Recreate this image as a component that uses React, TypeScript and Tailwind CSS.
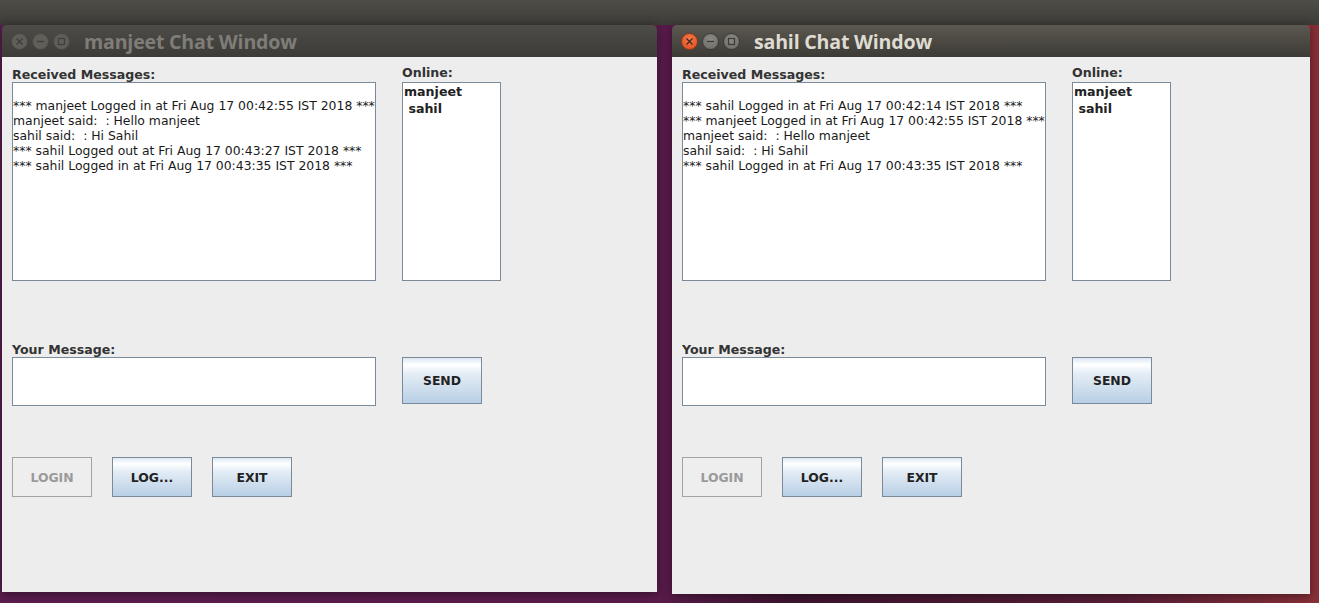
import React from "react";

type WinProps = {
  title: string;
  active: boolean;
  lines: string[];
  wide: boolean;
};

const LEFT_LINES = [
  "",
  "*** manjeet Logged in at Fri Aug 17 00:42:55 IST 2018 ***",
  "manjeet said:  : Hello manjeet",
  "sahil said:  : Hi Sahil",
  "*** sahil Logged out at Fri Aug 17 00:43:27 IST 2018 ***",
  "*** sahil Logged in at Fri Aug 17 00:43:35 IST 2018 ***",
];

const RIGHT_LINES = [
  "",
  "*** sahil Logged in at Fri Aug 17 00:42:14 IST 2018 ***",
  "*** manjeet Logged in at Fri Aug 17 00:42:55 IST 2018 ***",
  "manjeet said:  : Hello manjeet",
  "sahil said:  : Hi Sahil",
  "*** sahil Logged in at Fri Aug 17 00:43:35 IST 2018 ***",
];

export default function App() {
  return (
    <div className="w-[1319px] h-[603px] overflow-hidden flex flex-col bg-[linear-gradient(to_right,#5b1d4f_0%,#5a1c4c_50%,#3f1530_60%,#5a1f38_85%,#8a3038_100%)] font-['DejaVu_Sans',sans-serif]">
      {/* top panel */}
      <div className="h-[25px] shrink-0 bg-gradient-to-b from-[#4f4d47] to-[#3d3c38]" />
      <div className="flex items-start pl-[2px] gap-[15px]">
        <ChatWindow title="manjeet Chat Window" active={false} lines={LEFT_LINES} wide={true} />
        <ChatWindow title="sahil Chat Window" active={true} lines={RIGHT_LINES} wide={false} />
      </div>
    </div>
  );
}

function ChatWindow({ title, active, lines, wide }: WinProps) {
  return (
    <div
      className={`flex flex-col shadow-[0_2px_10px_rgba(0,0,0,0.45)] ${
        wide ? "w-[655px] h-[567px]" : "w-[638px] h-[569px]"
      }`}
    >
      <TitleBar title={title} active={active} />
      <div className="flex-1 bg-[#ededed] pl-[10px] pt-[7px] text-[#333333]">
        {/* received + online */}
        <div className="flex">
          <div className="flex flex-col">
            <div className="h-[18px] text-[12.6px] leading-[16px] font-bold pt-[3px]">Received Messages:</div>
            <div className="w-[364px] h-[199px] bg-white border border-[#7a8a99] overflow-hidden text-[12.4px] leading-[15px] text-[#1a1a1a] whitespace-pre">
              {lines.map((l, i) => (
                <div key={i} className="h-[15px]">{l}</div>
              ))}
            </div>
          </div>
          <div className="flex flex-col ml-[26px]">
            <div className="h-[18px] text-[12.6px] leading-[16px] font-bold pt-[1px]">Online:</div>
            <div className="w-[99px] h-[199px] bg-white border border-[#7a8a99] text-[12.6px] font-bold text-[#222] p-[1px] whitespace-pre">
              <div className="h-[17px] leading-[15px]">manjeet</div>
              <div className="h-[17px] leading-[15px]"> sahil</div>
            </div>
          </div>
        </div>

        {/* message input */}
        <div className="flex mt-[59px]">
          <div className="flex flex-col">
            <div className="h-[17px] text-[12.6px] leading-[16px] font-bold pt-[2px]">Your Message:</div>
            <div className="w-[364px] h-[49px] bg-white border border-[#7a8a99]" />
          </div>
          <div className="ml-[26px] pt-[17px]">
            <SwingButton label="SEND" className="w-[80px] h-[47px]" />
          </div>
        </div>

        {/* bottom buttons */}
        <div className="flex gap-[20px] mt-[51px]">
          <SwingButton label="LOGIN" disabled className="w-[80px] h-[40px]" />
          <SwingButton label="LOG..." className="w-[80px] h-[40px]" />
          <SwingButton label="EXIT" className="w-[80px] h-[40px]" />
        </div>
      </div>
    </div>
  );
}

function TitleBar({ title, active }: { title: string; active: boolean }) {
  return (
    <div
      className={`h-[32px] shrink-0 flex items-center pl-[9px] rounded-t-[5px] ${
        active
          ? "bg-gradient-to-b from-[#5b5850] to-[#3d3b36]"
          : "bg-gradient-to-b from-[#4e4c47] to-[#3c3b37]"
      }`}
    >
      <div className="flex items-center gap-[4px]">
        <CircleBtn kind="close" active={active} />
        <CircleBtn kind="min" active={active} />
        <CircleBtn kind="max" active={active} />
      </div>
      <div
        className={`ml-[14px] pt-[2px] text-[19.6px] leading-[24px] font-bold font-['Open_Sans',sans-serif] tracking-[-0.2px] ${
          active ? "text-[#dfdbd2]" : "text-[#7f7d78]"
        }`}
      >
        {title}
      </div>
    </div>
  );
}

function CircleBtn({ kind, active }: { kind: "close" | "min" | "max"; active: boolean }) {
  const isClose = kind === "close" && active;
  const fill = isClose
    ? "bg-[radial-gradient(circle_at_50%_35%,#f47a4a,#df4a1c)] border-[#8f3a1c]"
    : active
    ? "bg-[radial-gradient(circle_at_50%_35%,#8a8983,#6a6964)] border-[#3a3935]"
    : "bg-[#5f5e59] border-[#48473f]";
  const glyph = isClose ? "#3a2a22" : active ? "#3c3b37" : "#3f3e3a";
  return (
    <div className={`w-[17px] h-[17px] rounded-full border flex items-center justify-center ${fill}`}>
      <svg width="9" height="9" viewBox="0 0 9 9">
        {kind === "close" && (
          <path d="M1.5 1.5 L7.5 7.5 M7.5 1.5 L1.5 7.5" stroke={glyph} strokeWidth="1.3" fill="none" />
        )}
        {kind === "min" && <path d="M1 4.5 H8" stroke={glyph} strokeWidth="1.3" fill="none" />}
        {kind === "max" && <rect x="1.5" y="1.5" width="6" height="6" stroke={glyph} strokeWidth="1.2" fill="none" />}
      </svg>
    </div>
  );
}

function SwingButton({ label, disabled, className }: { label: string; disabled?: boolean; className: string }) {
  return (
    <div
      className={`flex items-center justify-center border text-[12.4px] font-bold pt-[2px] ${className} ${
        disabled
          ? "border-[#a3a3a3] bg-[#eeeeee] text-[#9a9a9a]"
          : "border-[#7a8a99] text-[#222] bg-[linear-gradient(to_bottom,#dde8f3_0%,#ffffff_15%,#e4edf6_35%,#b8cfe5_100%)]"
      }`}
    >
      {label}
    </div>
  );
}
